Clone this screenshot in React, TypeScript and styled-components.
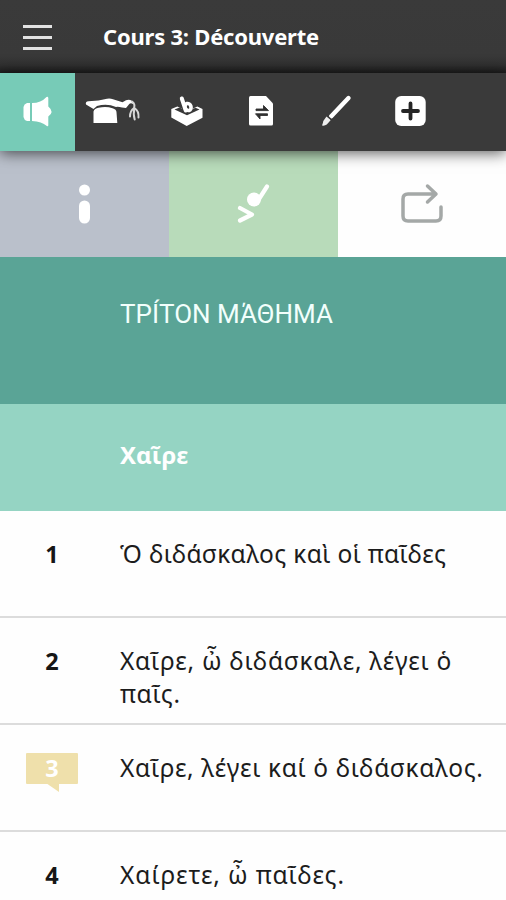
import React from "react";
import styled, { createGlobalStyle } from "styled-components";

const GlobalStyle = createGlobalStyle`
  * { box-sizing: border-box; }
  body { margin: 0; background: #fff; }
`;

const Screen = styled.div`
  width: 506px;
  height: 900px;
  overflow: hidden;
  display: flex;
  flex-direction: column;
  background: #fefefe;
  font-family: "Noto Sans", "Open Sans", sans-serif;
  color: #1c1c1c;
`;

const Header = styled.header`
  flex: none;
  height: 73px;
  display: flex;
  align-items: center;
  padding: 0 0 2px 23px;
  background: linear-gradient(#3a3a3a 0, #393939 56px, #303030 65px, #1e1e1e 73px);
`;

const MenuButton = styled.button`
  width: 29px;
  height: 25px;
  margin: 4px 51px 0 0;
  padding: 0;
  border: 0;
  background: none;
  display: flex;
  flex-direction: column;
  justify-content: space-between;
`;

const MenuBar = styled.span`
  height: 3px;
  background: #e2e2e2;
`;

const Title = styled.h1`
  margin: 0;
  font: 700 22px/30px "Noto Sans", sans-serif;
  letter-spacing: -0.22px;
  color: #fff;
  white-space: nowrap;
`;

const Toolbar = styled.nav`
  flex: none;
  height: 78px;
  display: flex;
  background: #3a3a3a;
  box-shadow: 0 2px 14px rgba(0, 0, 0, 0.65);
  z-index: 1;
`;

const Tool = styled.button<{ $active?: boolean }>`
  width: 75px;
  padding: 0;
  border: 0;
  background: ${(p) => (p.$active ? "#77cbb7" : "transparent")};
  svg { display: block; }
`;

const Tabs = styled.div`
  flex: none;
  height: 106px;
  display: grid;
  grid-template-columns: 169px 169px 168px;
`;

const Tab = styled.button<{ $color: string }>`
  padding: 0;
  border: 0;
  background: ${(p) => p.$color};
  svg { display: block; }
`;

const LessonTitle = styled.h2`
  flex: none;
  height: 147px;
  margin: 0;
  padding: 41px 0 0 120px;
  background: #5aa496;
  color: #f2fffc;
  font: 400 26px/32px Roboto, sans-serif;
`;

const SectionTitle = styled.h3`
  flex: none;
  height: 107px;
  margin: 0;
  padding: 34px 0 0 120px;
  background: #95d4c3;
  color: #fff;
  font: 700 24px/33px "Noto Sans", sans-serif;
`;

const Row = styled.div`
  flex: none;
  height: 107px;
  display: flex;
  padding-top: 26px;
  border-bottom: 2px solid #dcdcdc;
`;

const NumberCell = styled.div`
  width: 120px;
  padding-left: 26px;
  flex: none;
`;

const LineNumber = styled.span<{ $note?: boolean }>`
  position: relative;
  display: block;
  width: 52px;
  height: 31px;
  margin-top: 2px;
  border-radius: 1px;
  text-align: center;
  font: 700 23.500px/31px "Noto Sans", sans-serif;
  color: ${(p) => (p.$note ? "#fff" : "#161616")};
  background: ${(p) => (p.$note ? "#efe0ab" : "transparent")};
  &::after {
    content: "";
    display: ${(p) => (p.$note ? "block" : "none")};
    position: absolute;
    left: 20px;
    top: 30px;
    border-top: 9px solid #efe0ab;
    border-left: 13px solid transparent;
  }
`;

const Sentence = styled.p<{ $spacing: number }>`
  margin: 0;
  font: 400 24.5px/33px "Noto Sans", sans-serif;
  letter-spacing: ${(p) => p.$spacing}px;
  white-space: pre;
`;

const SpeakerIcon = () => (
  <svg width="75" height="78" viewBox="0 0 75 78" fill="#fff">
    <path d="M30 30v18h-3q-3-1-3.500-4V34q.5-3 3.500-4z" />
    <path d="M32 30Q41 30 46.500 24q1.500-1 1.800 1v8.500q6.500 5.500 0 10v9q-.5 1.500-1.800.3Q42 48.500 32 48z" />
  </svg>
);

const CapIcon = () => (
  <svg width="75" height="78" viewBox="0 0 75 78" fill="none">
    <path d="M11 31.500q-1-3 2.500-3.200l10-.8L32 25.800q3-.5 6 .4l9.500 3 3.500-2q6-1.700 7.500 4-2.500-1.500-4-.5L51 35l-4-.5q-4-1-6-.5-9-4-19-1l-3.500 3z" fill="#fff" />
    <path d="M18.500 50V38.500q1-3.300 5-3.800 8-1.400 14 .5 4 1.200 4 4l.8 10.800z" fill="#fff" />
    <path d="M57 28.500q3.500 2.500 2 6.500-4 3-4 8.500M59.500 35.500q-1.500 5 .2 11M59.500 35q4.500 3 4 9.500" stroke="#d8d8d8" strokeWidth="2" strokeLinecap="round" />
  </svg>
);

const BoxIcon = () => (
  <svg width="75" height="78" viewBox="0 0 75 78" fill="none">
    <path d="M21.300 36l6-2.500 10 4.800 10-4.800 5.200 2.500v8.700L36.700 53l-15.400-8.500z" fill="#fff" />
    <path d="M24.500 36.500l5-2 8 3.800 8-3.500 4 1.700L37 42.300z" fill="#393939" />
    <path d="M31.800 25.500l4 12" stroke="#fff" strokeWidth="4" strokeLinecap="round" />
    <ellipse cx="38" cy="34" rx="3" ry="3.600" transform="rotate(-18 38 34)" stroke="#fff" strokeWidth="3.600" />
  </svg>
);

const DocumentIcon = () => (
  <svg width="75" height="78" viewBox="0 0 75 78">
    <path d="M25.500 23H41l7 7.500V51q0 1.500-1.500 1.500h-21Q24 52.500 24 51V24.500q0-1.500 1.500-1.500z" fill="#fff" />
    <path d="M31 36h7.500v-3.500l5 5.100H31zM42.500 40.800v1.700H35V46l-4.500-5.200z" fill="#303030" stroke="#303030" strokeWidth=".9" />
  </svg>
);

const BrushIcon = () => (
  <svg width="75" height="78" viewBox="0 0 75 78" fill="none">
    <path d="M31 43.500L48.500 25" stroke="#fff" strokeWidth="4.400" strokeLinecap="round" />
    <path d="M26.500 43.500l4.300 3.600-4 4.500q-2 1.500-4.800 1 1-2 1.300-4.500z" fill="#eee" />
    <path d="M26.500 42l5.800 5.500" stroke="#3a3a3a" strokeWidth="1.300" />
  </svg>
);

const PlusIcon = () => (
  <svg width="75" height="78" viewBox="0 0 75 78">
    <rect x="20.200" y="23" width="30.500" height="30" rx="6" fill="#fff" />
    <path d="M28 38h15M35.500 30.500v15" stroke="#252525" strokeWidth="3.800" strokeLinecap="round" />
  </svg>
);

const InfoIcon = () => (
  <svg width="169" height="106" viewBox="0 0 169 106" fill="#fff">
    <circle cx="84.500" cy="39" r="5.500" />
    <rect x="79" y="49.500" width="11" height="23" rx="5.500" />
  </svg>
);

const NoteIcon = () => (
  <svg width="169" height="106" viewBox="0 0 169 106" fill="none" stroke="#fff" strokeWidth="4.200" strokeLinecap="round" strokeLinejoin="round">
    <circle cx="85" cy="48.500" r="7" fill="#fff" stroke="none" />
    <path d="M90 48l8-12.500M71 57l12 6.500L71 69.500" />
  </svg>
);

const RepeatIcon = () => (
  <svg width="168" height="106" viewBox="0 0 168 106" fill="none" stroke="#a4a8a7" strokeWidth="3.500" strokeLinecap="round" strokeLinejoin="round">
    <path d="M97 43H70q-5 0-5 5v17q0 5 5 5H98q5 0 5-5v-9M89.500 35l8.500 8-8.500 8" />
  </svg>
);

const tools = [SpeakerIcon, CapIcon, BoxIcon, DocumentIcon, BrushIcon, PlusIcon];

const tabs = [
  { color: "#bac0cb", Icon: InfoIcon },
  { color: "#b8dbba", Icon: NoteIcon },
  { color: "#fefefe", Icon: RepeatIcon },
];

const lines = [
  { text: "Ὁ διδάσκαλος καὶ οἱ παῖδες", spacing: 0.35 },
  { text: "Χαῖρε, ὦ διδάσκαλε, λέγει ὁ\nπαῖς.", spacing: 0.72 },
  { text: "Χαῖρε, λέγει καί ὁ διδάσκαλος.", spacing: 0.63 },
  { text: "Χαίρετε, ὦ παῖδες.", spacing: 0.9 },
];

const annotatedLine = 3;

export default function App() {
  return (
    <Screen>
      <GlobalStyle />
      <Header>
        <MenuButton aria-label="Menu">
          <MenuBar />
          <MenuBar />
          <MenuBar />
        </MenuButton>
        <Title>Cours 3: Découverte</Title>
      </Header>
      <Toolbar>
        {tools.map((Icon, i) => (
          <Tool key={i} $active={i === 0}>
            <Icon />
          </Tool>
        ))}
      </Toolbar>
      <Tabs>
        {tabs.map(({ color, Icon }) => (
          <Tab key={color} $color={color}>
            <Icon />
          </Tab>
        ))}
      </Tabs>
      <LessonTitle>ΤΡÍΤΟΝ ΜΆΘΗΜΑ</LessonTitle>
      <SectionTitle>Χαῖρε</SectionTitle>
      {lines.map((line, i) => (
        <Row key={i}>
          <NumberCell>
            <LineNumber $note={i + 1 === annotatedLine}>{i + 1}</LineNumber>
          </NumberCell>
          <Sentence $spacing={line.spacing}>{line.text}</Sentence>
        </Row>
      ))}
    </Screen>
  );
}
